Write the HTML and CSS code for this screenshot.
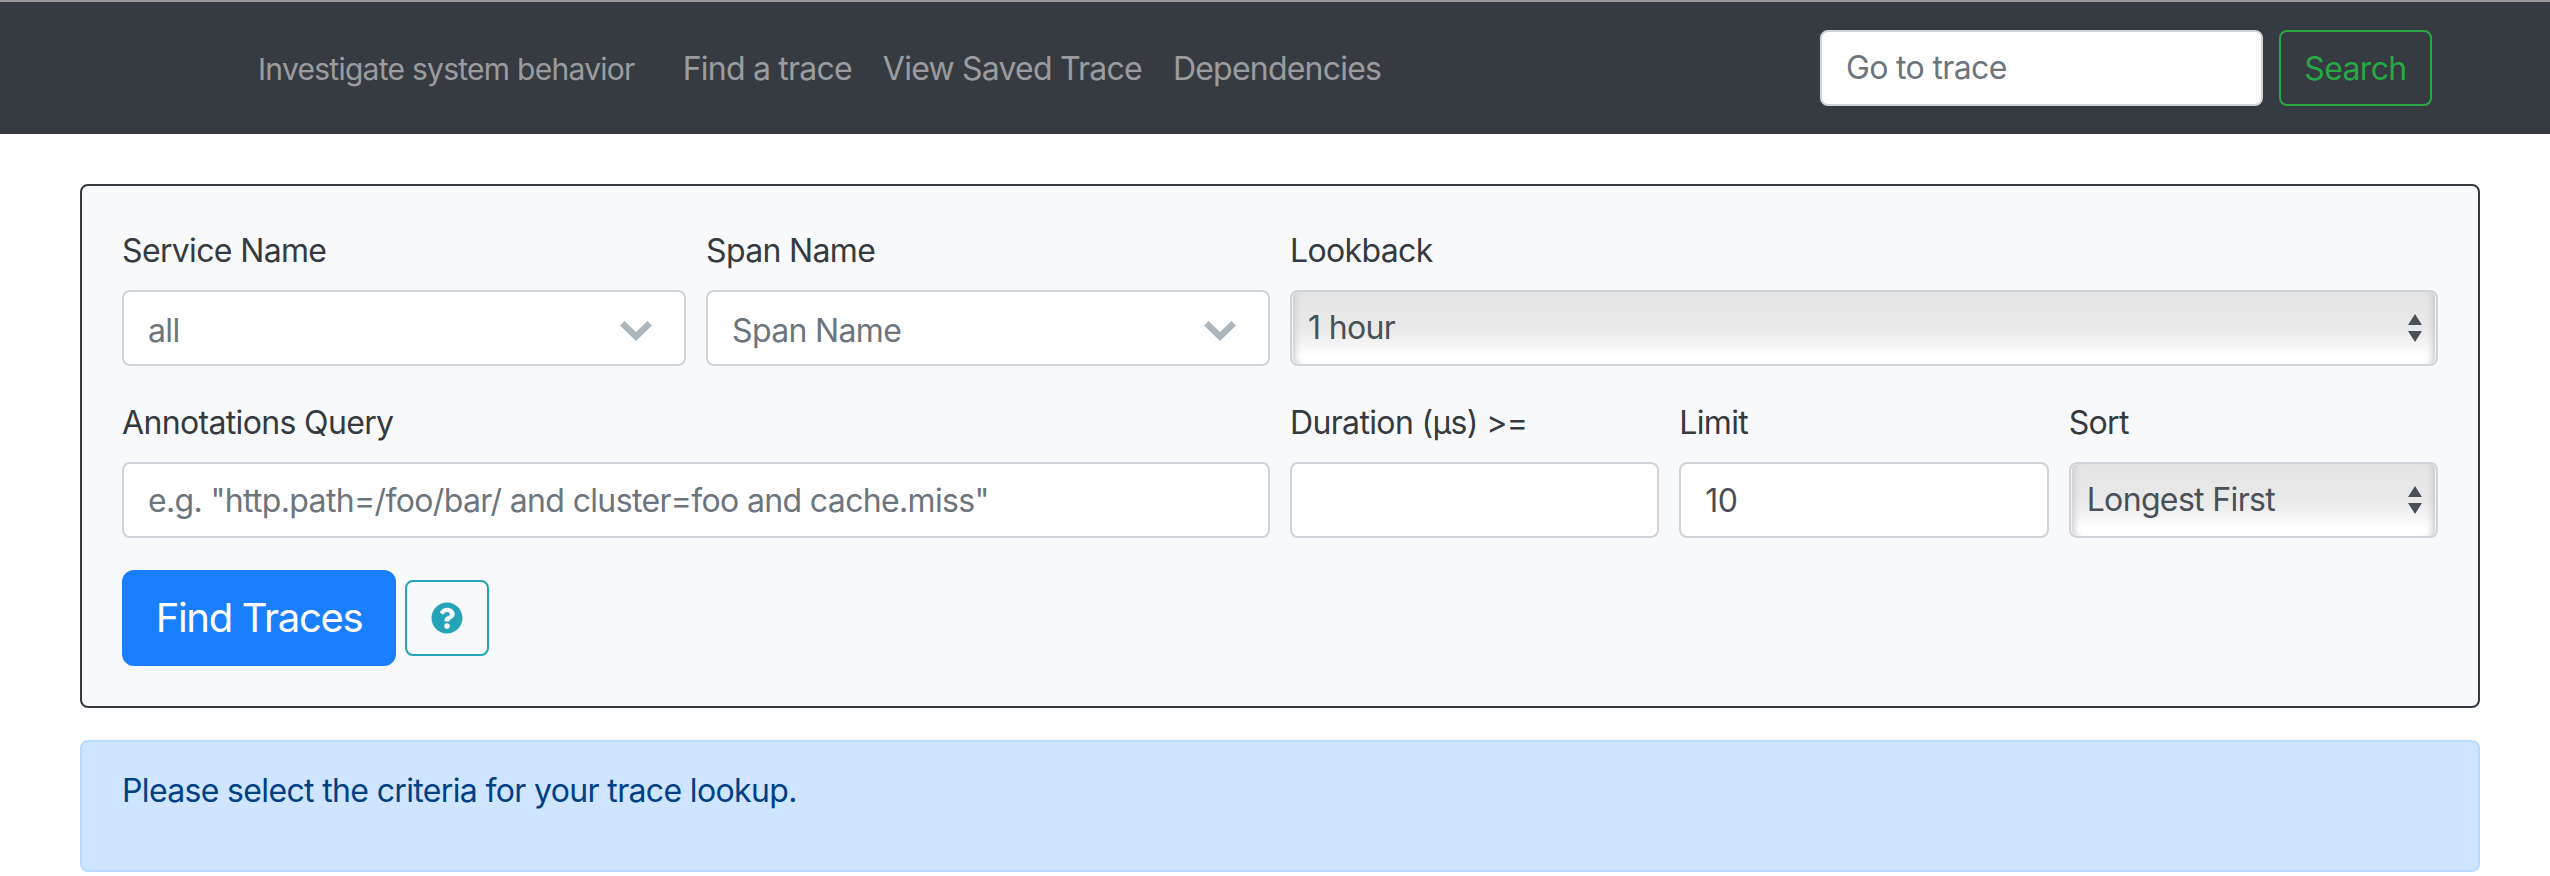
FILE: index.html
```html
<!DOCTYPE html>
<html lang="en">
<head>
<meta charset="utf-8">
<title>Jaeger</title>
<link rel="stylesheet" href="styles.css">
</head>
<body>
<nav class="navbar">
  <span class="tagline">Investigate system behavior</span>
  <ul class="nav-links">
    <li><a href="#">Find a trace</a></li>
    <li><a href="#">View Saved Trace</a></li>
    <li><a href="#">Dependencies</a></li>
  </ul>
  <form class="nav-search">
    <input class="control nav-input" type="text" placeholder="Go to trace">
    <button class="btn-search" type="button">Search</button>
  </form>
</nav>
<main class="container">
  <form class="panel">
    <div class="form-grid">
      <div class="field span-3">
        <label>Service Name</label>
        <div class="combo"><span>all</span>
          <svg class="chevron" viewBox="0 0 32 20"><path d="M0 4.500 4.500 0 16 11 27.500 0 32 4.500 16 20Z"/></svg>
        </div>
      </div>
      <div class="field span-3">
        <label>Span Name</label>
        <div class="combo"><span>Span Name</span>
          <svg class="chevron" viewBox="0 0 32 20"><path d="M0 4.500 4.500 0 16 11 27.500 0 32 4.500 16 20Z"/></svg>
        </div>
      </div>
      <div class="field span-6">
        <label>Lookback</label>
        <div class="native">
          <select class="native-select"><option>1 hour</option></select>
          <svg class="stepper" viewBox="0 0 14 28"><path d="M7 0 14 11H0ZM0 17H14L7 28Z"/></svg>
        </div>
      </div>
      <div class="field span-6">
        <label>Annotations Query</label>
        <input class="control" type="text" placeholder="e.g. &quot;http.path=/foo/bar/ and cluster=foo and cache.miss&quot;">
      </div>
      <div class="field span-2">
        <label>Duration (µs) &gt;=</label>
        <input class="control" type="text">
      </div>
      <div class="field span-2">
        <label>Limit</label>
        <input class="control" type="text" value="10">
      </div>
      <div class="field span-2">
        <label>Sort</label>
        <div class="native">
          <select class="native-select"><option>Longest First</option></select>
          <svg class="stepper" viewBox="0 0 14 28"><path d="M7 0 14 11H0ZM0 17H14L7 28Z"/></svg>
        </div>
      </div>
    </div>
    <div class="actions">
      <button class="btn-find" type="button">Find Traces</button>
      <button class="btn-help" type="button" aria-label="Help">
        <svg class="help-icon" viewBox="0 0 512 512"><path d="M504 256c0 137-111 248-248 248S8 393 8 256 119 8 256 8s248 111 248 248zM262.700 90c-54.500 0-89.300 23-116.600 63.800-3.500 5.300-2.400 12.400 2.700 16.300l34.700 26.300c5.200 3.900 12.600 3 16.700-2.100 17.900-22.700 30.100-35.800 57.300-35.800 20.400 0 45.700 13.100 45.700 33 0 15-12.400 22.700-32.600 34-23.600 13.200-54.800 29.700-54.800 70.900V300c0 6.600 5.400 12 12 12h56c6.600 0 12-5.400 12-12v-1.300c0-28.600 83.500-29.700 83.500-107C380 133.500 319.800 90 262.700 90zM256 338c-25.400 0-46 20.600-46 46 0 25.400 20.600 46 46 46s46-20.600 46-46c0-25.400-20.600-46-46-46z"/></svg>
      </button>
    </div>
  </form>
  <div class="alert"><p>Please select the criteria for your trace lookup.</p></div>
</main>
</body>
</html>
```
FILE: styles.css
```css
* { box-sizing: border-box; }
html, body { margin: 0; padding: 0; }
body {
  background: #fff;
  color: #343a40;
  font-family: Inter, "Liberation Sans", sans-serif;
  font-size: 32px;
  line-height: 48px;
  letter-spacing: -0.65px;
  overflow: hidden;
}
.navbar {
  display: flex;
  align-items: center;
  height: 134px;
  padding: 0 118px 0 258px;
  background: #363a41;
  border-top: 2px solid #999;
}
.tagline {
  padding-top: 1px;
  margin-right: 48px;
  color: rgba(255, 255, 255, 0.5);
  font-size: 30px;
  letter-spacing: -0.73px;
}
.nav-links { display: flex; gap: 31px; list-style: none; margin: 0; padding: 1px 0 0; }
.nav-links a { color: rgba(255, 255, 255, 0.5); text-decoration: none; letter-spacing: -0.78px; }
.nav-search { display: flex; gap: 16px; margin-left: auto; }
.control {
  display: block;
  width: 100%;
  height: 76px;
  padding: 13px 24px;
  background: #fff;
  border: 2px solid #ced4da;
  border-radius: 8px;
  color: #495057;
  font: inherit;
  letter-spacing: inherit;
}
.control::placeholder { color: #6c757d; opacity: 1; }
.nav-input { width: 443px; padding-top: 12px; }
.btn-search {
  width: 153px;
  height: 76px;
  padding: 1px 0 0;
  background: transparent;
  border: 2px solid #28a745;
  border-radius: 8px;
  color: #28a745;
  font: inherit;
  letter-spacing: inherit;
}
.container { padding: 50px 70px 0 80px; }
.panel {
  padding: 40px;
  background: #f8f9fa;
  border: 2px solid #343a40;
  border-radius: 8px;
}
.form-grid {
  display: grid;
  grid-template-columns: repeat(12, 1fr);
  column-gap: 20px;
}
.field { margin-bottom: 32px; min-width: 0; }
.field label { display: block; padding-top: 1px; margin-bottom: 15px; }
.span-2 { grid-column: span 2; }
.span-3 { grid-column: span 3; }
.span-6 { grid-column: span 6; }
.combo {
  display: flex;
  align-items: center;
  justify-content: space-between;
  height: 76px;
  padding: 5px 32px 0 24px;
  background: #fff;
  border: 2px solid #ced4da;
  border-radius: 8px;
  color: #6c757d;
}
.chevron { width: 32px; height: 20px; fill: #aeb6bd; }
.native { position: relative; }
.native-select {
  display: block;
  width: 100%;
  height: 76px;
  padding: 0 16px;
  appearance: none;
  background: linear-gradient(to bottom, #e5e5e5 0%, #e9e9e9 50%, #f3f3f3 70%, #fff 88%, #fff 100%);
  border: 2px solid #ced4da;
  border-radius: 8px;
  box-shadow: inset -1px 0 0 #f4f4f4, inset 1px 0 0 #f4f4f4, inset 9px 0 7px -6px #cacaca, inset -9px 0 7px -6px #c6c6c6;
  color: #495057;
  font: inherit;
  letter-spacing: inherit;
}
.stepper {
  position: absolute;
  top: 24px;
  right: 16px;
  width: 14px;
  height: 28px;
  fill: #495057;
  pointer-events: none;
}
.actions { display: flex; align-items: center; gap: 9px; }
.btn-find {
  width: 274px;
  height: 96px;
  padding: 0;
  background: #1a7fff;
  border: 2px solid #1a7fff;
  border-radius: 12px;
  color: #fff;
  font: inherit;
  font-size: 40px;
  letter-spacing: -1.3px;
}
.btn-help {
  display: flex;
  align-items: center;
  justify-content: center;
  width: 84px;
  height: 76px;
  padding: 0;
  background: transparent;
  border: 2px solid #25a3b8;
  border-radius: 8px;
}
.help-icon { width: 32px; height: 32px; fill: #25a3b8; }
.alert {
  margin-top: 32px;
  padding: 25px 40px 23px;
  background: #cfe4ff;
  border: 2px solid #b8daff;
  border-radius: 8px;
  color: #004085;
}
.alert p { margin: 0 0 32px; }
```
